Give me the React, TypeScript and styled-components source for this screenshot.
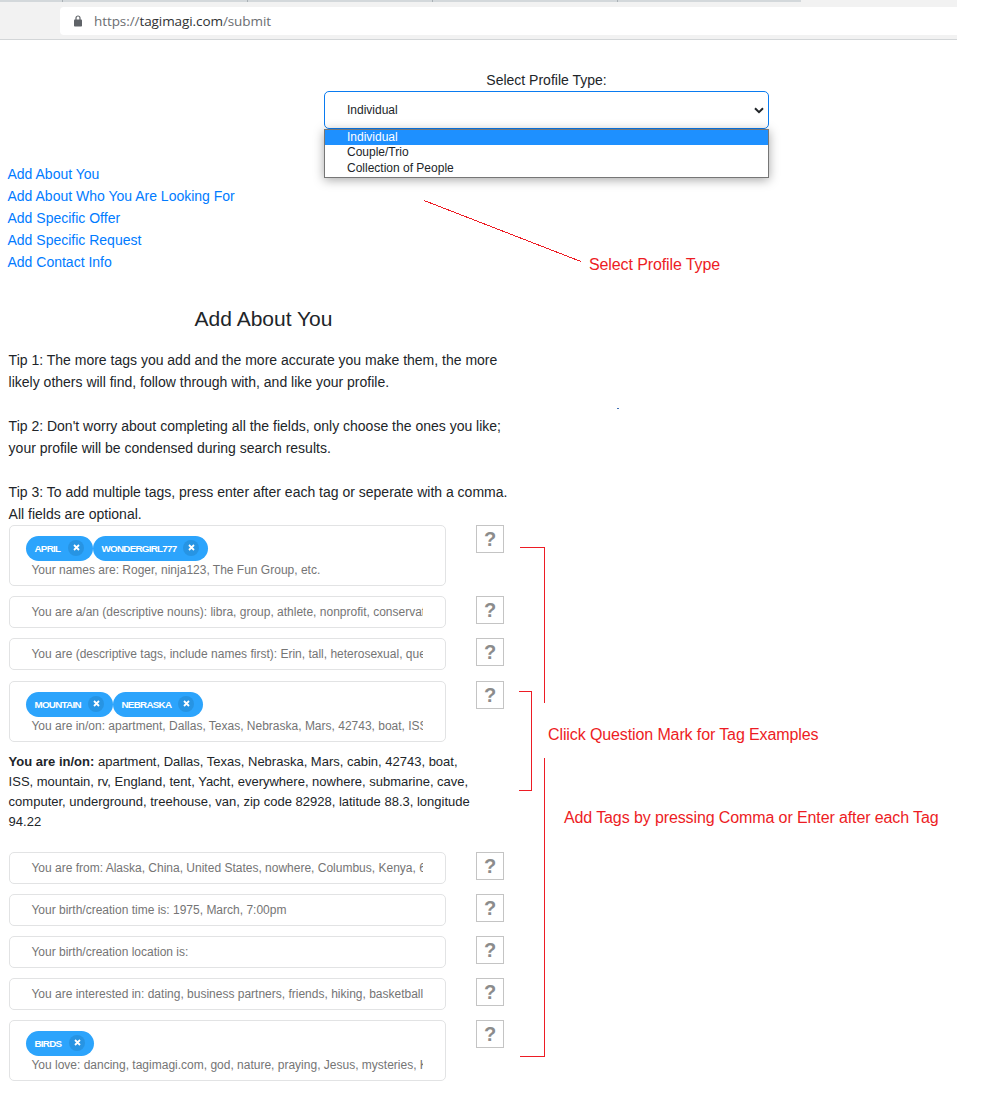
import React from "react";
import styled, { createGlobalStyle } from "styled-components";

const GlobalStyle = createGlobalStyle`
  *, *::before, *::after { box-sizing: border-box; }
  body {
    margin: 0;
    background: #fff;
    color: #212529;
    font: 14px/22px "Liberation Sans", Arial, sans-serif;
  }
`;

const Page = styled.div`
  position: relative;
  width: 1003px;
  height: 1110px;
  overflow: hidden;
`;

const BrowserBar = styled.header`
  width: 957px;
  height: 40px;
  background: #f2f2f2;
  border-bottom: 1px solid #d3d6d8;
  display: flex;
  flex-direction: column;
`;

const TabStrip = styled.div`
  width: 801px;
  height: 2px;
  background: #d3d8db;
  display: flex;
  padding-left: 62px;
  gap: 184px;
`;

const TabDivider = styled.span`
  width: 1px;
  height: 2px;
  background: #a9b0b5;
`;

const AddressBar = styled.div`
  margin: 5px 0 0 60px;
  height: 28px;
  padding-left: 14px;
  display: flex;
  align-items: center;
  gap: 12px;
  background: #fff;
  border-radius: 4px 0 0 4px;
`;

const Url = styled.span`
  font: 13.5px/28px "Open Sans", "Noto Sans", sans-serif;
  letter-spacing: -0.08px;
  color: #6b6e72;
`;

const Host = styled.span`
  color: #303234;
`;

const ProfilePicker = styled.section`
  width: 445px;
  margin: 29px 0 0 324px;
  display: flex;
  flex-direction: column;
  position: relative;
`;

const PickerLabel = styled.label`
  text-align: center;
`;

const SelectBox = styled.div`
  height: 38px;
  border: 1px solid #0a7bf0;
  border-radius: 5px;
  padding: 0 4px 0 22px;
  display: flex;
  align-items: center;
  justify-content: space-between;
  font-size: 12px;
`;

const Menu = styled.ul`
  position: absolute;
  top: 60px;
  left: 0;
  width: 445px;
  height: 49px;
  margin: 0;
  padding: 0;
  list-style: none;
  background: #fff;
  border: 1px solid #767676;
  box-shadow: 0 2px 10px rgba(0, 0, 0, 0.35);
  font-size: 12px;
`;

const Option = styled.li<{ $active?: boolean }>`
  height: ${(p) => (p.$active ? 15 : 16)}px;
  line-height: ${(p) => (p.$active ? 14 : 15)}px;
  padding-left: 22px;
  color: ${(p) => (p.$active ? "#fff" : "#212529")};
  background: ${(p) => (p.$active ? "#1e90ff" : "#fff")};
`;

const Links = styled.nav`
  margin: 34px 0 0 7.5px;
  display: flex;
  flex-direction: column;
  align-items: flex-start;
`;

const Link = styled.a`
  color: #007bff;
  text-decoration: none;
`;

const Heading = styled.h2`
  width: 510px;
  margin: 33px 0 0 8.5px;
  text-align: center;
  font-size: 21px;
  font-weight: 400;
  line-height: 26px;
`;

const Tips = styled.div`
  margin: 17px 0 0 8.6px;
  display: grid;
  gap: 22px;
  white-space: nowrap;
`;

const Tip = styled.p`
  margin: 0;
`;

const Form = styled.main`
  padding-left: 9px;
  width: 504px;
`;

const Row = styled.div<{ $after: number }>`
  display: flex;
  justify-content: space-between;
  align-items: flex-start;
  margin-bottom: ${(p) => p.$after}px;
`;

const Field = styled.div<{ $tagged: boolean }>`
  width: 437px;
  height: ${(p) => (p.$tagged ? 61 : 32)}px;
  padding: ${(p) => (p.$tagged ? "10px" : "7px")} 22px 0 16px;
  border: 1px solid #e2e3e4;
  border-radius: 5px;
`;

const TagList = styled.div`
  display: flex;
  height: 26px;
`;

const Tag = styled.span<{ $width: number }>`
  width: ${(p) => p.$width}px;
  height: 25px;
  padding: 0 9px 0 8.5px;
  border-radius: 13px;
  background: #2ca4fc;
  color: #fff;
  display: flex;
  align-items: center;
  justify-content: space-between;
  font-size: 9.8px;
  font-weight: 700;
  letter-spacing: -0.72px;
  white-space: nowrap;
`;

const TagRemove = styled.span`
  width: 16px;
  height: 16px;
  margin-top: -2px;
  border-radius: 50%;
  background: #2794e3;
  display: flex;
  align-items: center;
  justify-content: center;
`;

const Placeholder = styled.div`
  padding-left: 5.4px;
  height: 17px;
  line-height: 17px;
  font-size: 12px;
  color: #757575;
  white-space: nowrap;
  overflow: hidden;
`;

const HelpButton = styled.button`
  width: 28px;
  height: 28px;
  padding: 0;
  border: 1px solid #c4c4c4;
  background: #fff;
  color: #8c8c8c;
  font: 700 20px/26px "Liberation Sans", Arial, sans-serif;
`;

const Examples = styled.p`
  margin: 0 0 20px -0.4px;
  font-size: 13px;
  line-height: 20px;
  white-space: nowrap;
`;

const Markup = styled.svg`
  position: absolute;
  inset: 0;
  pointer-events: none;
`;

const Note = styled.span<{ $x: number; $y: number }>`
  position: absolute;
  left: ${(p) => p.$x}px;
  top: ${(p) => p.$y}px;
  font-size: 16px;
  line-height: 20px;
  letter-spacing: -0.11px;
  color: #ed1c24;
  white-space: nowrap;
`;

type TagData = { name: string; width: number };
type FieldData = {
  hint: string;
  tags?: TagData[];
  after: number;
  examples?: React.ReactNode;
};

const fields: FieldData[] = [
  {
    hint: "Your names are: Roger, ninja123, The Fun Group, etc.",
    tags: [{ name: "APRIL", width: 67 }, { name: "WONDERGIRL777", width: 115 }],
    after: 10,
  },
  { hint: "You are a/an (descriptive nouns): libra, group, athlete, nonprofit, conservative", after: 10 },
  { hint: "You are (descriptive tags, include names first): Erin, tall, heterosexual, queer", after: 11 },
  {
    hint: "You are in/on: apartment, Dallas, Texas, Nebraska, Mars, 42743, boat, ISS, mountain",
    tags: [{ name: "MOUNTAIN", width: 87 }, { name: "NEBRASKA", width: 90 }],
    after: 10,
    examples: (
      <>
        <b>You are in/on:</b> apartment, Dallas, Texas, Nebraska, Mars, cabin, 42743, boat,
        <br />
        ISS, mountain, rv, England, tent, Yacht, everywhere, nowhere, submarine, cave,
        <br />
        computer, underground, treehouse, van, zip code 82928, latitude 88.3, longitude
        <br />
        94.22
      </>
    ),
  },
  { hint: "You are from: Alaska, China, United States, nowhere, Columbus, Kenya, 60614", after: 10 },
  { hint: "Your birth/creation time is: 1975, March, 7:00pm", after: 10 },
  { hint: "Your birth/creation location is:", after: 10 },
  { hint: "You are interested in: dating, business partners, friends, hiking, basketball", after: 10 },
  {
    hint: "You love: dancing, tagimagi.com, god, nature, praying, Jesus, mysteries, Kenya",
    tags: [{ name: "BIRDS", width: 68 }],
    after: 0,
  },
];

const links = [
  "Add About You",
  "Add About Who You Are Looking For",
  "Add Specific Offer",
  "Add Specific Request",
  "Add Contact Info",
];

const LockIcon = () => (
  <svg width="8" height="12" viewBox="0 0 8 12">
    <path d="M2 5V3a2 2 0 0 1 4 0v2" fill="none" stroke="#5f6368" strokeWidth="1.2" />
    <rect y="4.5" width="8" height="7" rx="0.8" fill="#5f6368" />
  </svg>
);

const ChevronIcon = () => (
  <svg width="10" height="7" viewBox="0 0 10 7">
    <path d="M1 1.2 5 5.2 9 1.2" fill="none" stroke="#212529" strokeWidth="2" />
  </svg>
);

const CrossIcon = () => (
  <svg width="7" height="7" viewBox="0 0 7 7">
    <path d="M1 1l5 5M6 1L1 6" stroke="#fff" strokeWidth="1.8" />
  </svg>
);

export default function App() {
  return (
    <Page>
      <GlobalStyle />
      <BrowserBar>
        <TabStrip>
          <TabDivider />
          <TabDivider />
          <TabDivider />
          <TabDivider />
        </TabStrip>
        <AddressBar>
          <LockIcon />
          <Url>
            https://<Host>tagimagi.com</Host>/submit
          </Url>
        </AddressBar>
      </BrowserBar>

      <ProfilePicker>
        <PickerLabel>Select Profile Type:</PickerLabel>
        <SelectBox>
          Individual
          <ChevronIcon />
        </SelectBox>
        <Menu>
          <Option $active>Individual</Option>
          <Option>Couple/Trio</Option>
          <Option>Collection of People</Option>
        </Menu>
      </ProfilePicker>

      <Links>
        {links.map((text) => (
          <Link key={text}>{text}</Link>
        ))}
      </Links>

      <Heading>Add About You</Heading>
      <Tips>
        <Tip>
          Tip 1: The more tags you add and the more accurate you make them, the more
          <br />
          likely others will find, follow through with, and like your profile.
        </Tip>
        <Tip>
          Tip 2: Don't worry about completing all the fields, only choose the ones you like;
          <br />
          your profile will be condensed during search results.
        </Tip>
        <Tip>
          Tip 3: To add multiple tags, press enter after each tag or seperate with a comma.
          <br />
          All fields are optional.
        </Tip>
      </Tips>

      <Form>
        {fields.map((field) => (
          <React.Fragment key={field.hint}>
            <Row $after={field.after}>
              <Field $tagged={!!field.tags}>
                {field.tags && (
                  <TagList>
                    {field.tags.map((tag) => (
                      <Tag key={tag.name} $width={tag.width}>
                        {tag.name}
                        <TagRemove>
                          <CrossIcon />
                        </TagRemove>
                      </Tag>
                    ))}
                  </TagList>
                )}
                <Placeholder>{field.hint}</Placeholder>
              </Field>
              <HelpButton>?</HelpButton>
            </Row>
            {field.examples && <Examples>{field.examples}</Examples>}
          </React.Fragment>
        ))}
      </Form>

      <Markup width="1003" height="1110" fill="none" stroke="#ed1c24" shapeRendering="crispEdges">
        <path d="M424 200.5 581 261.5" />
        <path d="M520 547.5H544.5V703" />
        <path d="M519 691.5H531.5V790.5H519" />
        <path d="M544.5 758V1056.5H520" />
        <path d="M617 408.5h2" stroke="#3f6fb5" />
      </Markup>
      <Note $x={589} $y={255}>Select Profile Type</Note>
      <Note $x={548} $y={725}>Cliick Question Mark for Tag Examples</Note>
      <Note $x={564} $y={808}>Add Tags by pressing Comma or Enter after each Tag</Note>
    </Page>
  );
}
